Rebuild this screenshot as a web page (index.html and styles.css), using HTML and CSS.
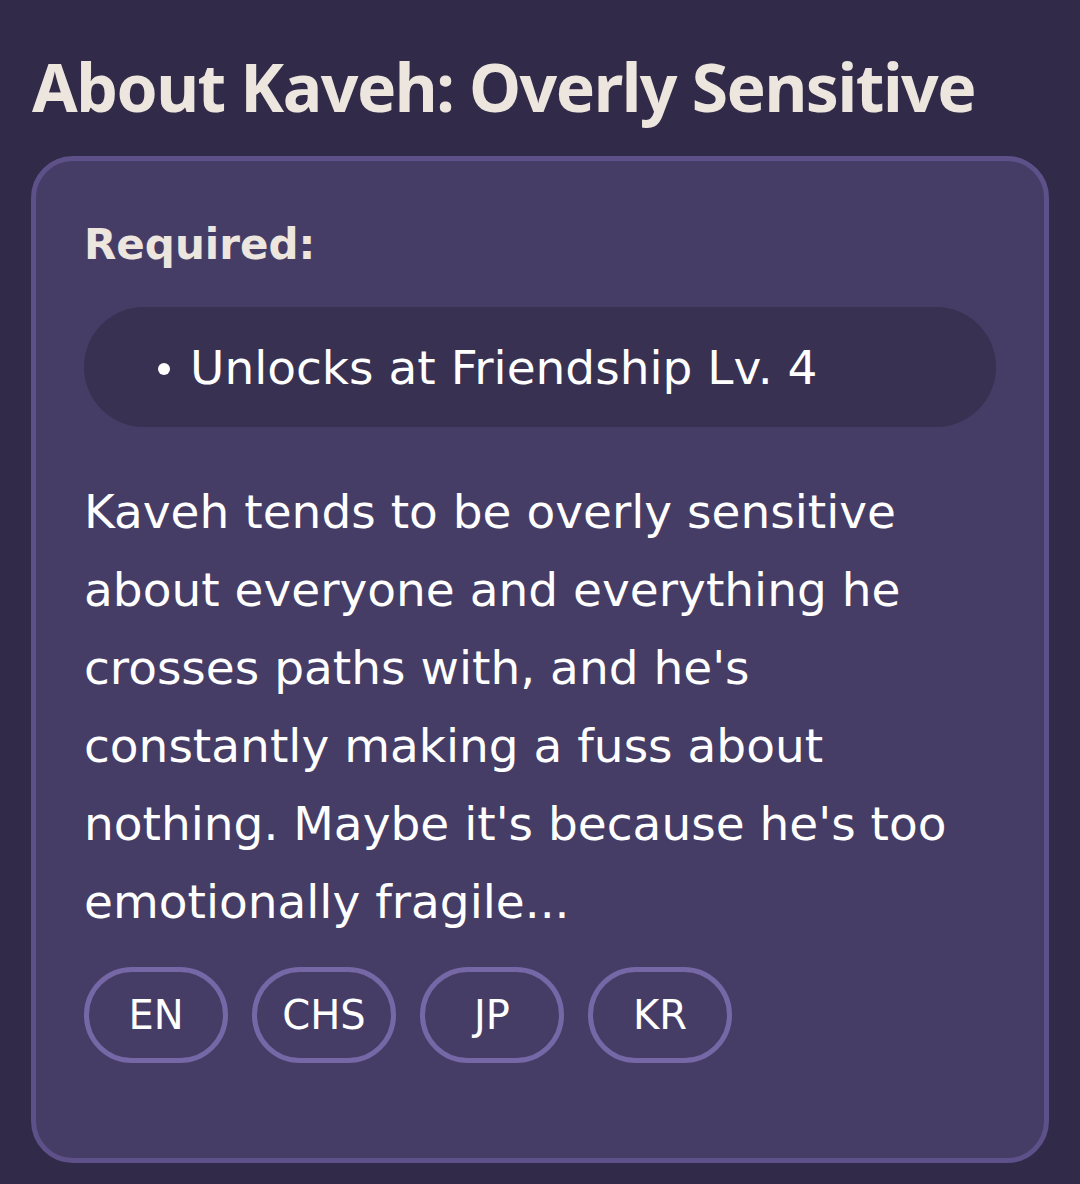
FILE: index.html
```html
<!DOCTYPE html>
<html lang="en">
<head>
<meta charset="utf-8">
<title>About Kaveh: Overly Sensitive</title>
<link rel="stylesheet" href="styles.css">
</head>
<body>
<main class="page">
  <h1 class="title">About Kaveh: Overly Sensitive</h1>
  <section class="card">
    <h2 class="req-label">Required:</h2>
    <ul class="req-list">
      <li>Unlocks at Friendship Lv. 4</li>
    </ul>
    <p class="story">Kaveh tends to be overly sensitive about everyone and everything he crosses paths with, and he's constantly making a fuss about nothing. Maybe it's because he's too emotionally fragile...</p>
    <div class="langs">
      <button class="lang">EN</button>
      <button class="lang">CHS</button>
      <button class="lang">JP</button>
      <button class="lang">KR</button>
    </div>
  </section>
</main>
</body>
</html>
```
FILE: styles.css
```css
html, body {
  margin: 0;
  padding: 0;
  background: #312a48;
}
body {
  width: 1080px;
  height: 1184px;
  overflow: hidden;
}
.page {
  padding: 46px 31px 0 31px;
  font-family: "DejaVu Sans", "Open Sans", sans-serif;
}
.title {
  margin: 0 0 30px 1px;
  font-family: "Noto Sans", "Liberation Sans", sans-serif;
  font-weight: 700;
  font-size: 66px;
  line-height: 80px;
  letter-spacing: -1.5px;
  color: #ede6de;
}
.card {
  box-sizing: border-box;
  height: 1007px;
  background: #463d66;
  border: 5px solid #5e5088;
  border-radius: 42px;
  padding: 52px 48px 0 48px;
}
.req-label {
  margin: 0;
  font-size: 42px;
  line-height: 64px;
  font-weight: 700;
  color: #ede6de;
}
.req-list {
  margin: 30px 0 0 0;
  list-style: none;
  background: #393152;
  border-radius: 60px;
  height: 120px;
  display: flex;
  align-items: center;
  padding: 0 0 0 74px;
}
.req-list li {
  font-size: 47px;
  color: #ffffff;
  position: relative;
  padding-left: 32px;
}
.req-list li::before {
  content: "";
  position: absolute;
  left: 0;
  top: 50%;
  width: 12px;
  height: 12px;
  margin-top: -4px;
  border-radius: 50%;
  background: #ffffff;
}
.story {
  margin: 46px 0 0 0;
  font-size: 47px;
  line-height: 78px;
  color: #ffffff;
}
.langs {
  display: flex;
  gap: 24px;
  margin-top: 26px;
}
.lang {
  box-sizing: border-box;
  width: 144px;
  height: 96px;
  border: 5px solid #7668a6;
  border-radius: 48px;
  background: transparent;
  color: #ffffff;
  font-family: "DejaVu Sans", "Open Sans", sans-serif;
  font-size: 40px;
  padding: 0;
}
```
